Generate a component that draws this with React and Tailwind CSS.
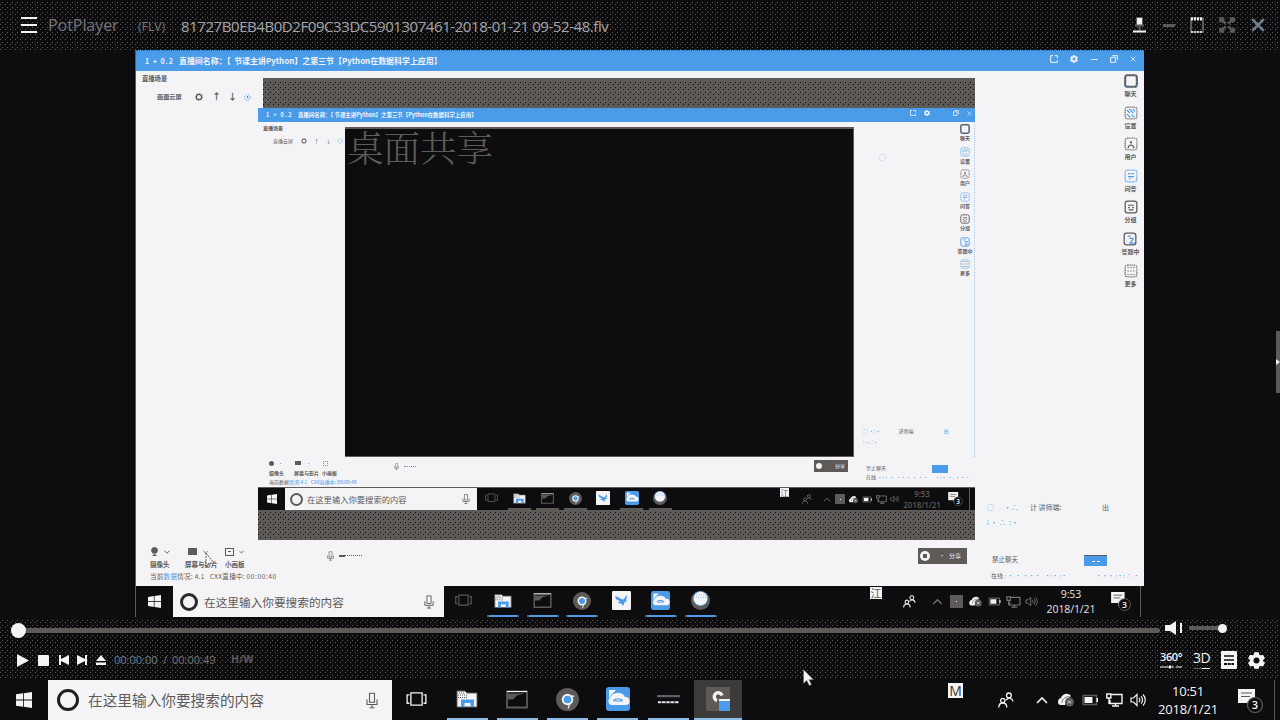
import React from "react";

const DOTS = "bg-[#0d0d0f] bg-[radial-gradient(circle,#5e5a58_0.5px,transparent_0.6px),radial-gradient(circle,#5e5a58_0.5px,transparent_0.6px)] bg-[size:5px_5px] bg-[position:0_0,3px_2px]";
const BAND = "bg-[#5e5a58] bg-[radial-gradient(circle,#0d0d0f_0.5px,transparent_0.6px),radial-gradient(circle,#0d0d0f_0.5px,transparent_0.6px)] bg-[size:5px_5px] bg-[position:0_0,3px_2px]";

function Svg({ className, box = "0 0 24 24", children }) {
  return (
    <svg className={"shrink-0 " + className} viewBox={box} fill="none" stroke="currentColor" strokeWidth="2">
      {children}
    </svg>
  );
}

const Windows = ({ className }) => (
  <Svg className={className}>
    <path fill="#f4f4f7" stroke="none" d="M0 3.5 10.8 2v9.3H0zM12 1.8 24 0v11.3H12zM0 12.6h10.8V22L0 20.5zM12 12.6h12V24l-12-1.8z" />
  </Svg>
);
const Mic = ({ className }) => (
  <Svg className={className} box="0 0 12 16">
    <path strokeWidth="1.1" d="M3.5.7h5v9h-5zM1 7v5h10V7M6 12v3.2M3.5 15.3h5" />
  </Svg>
);
const TaskView = ({ className }) => (
  <Svg className={className} box="0 0 22 16">
    <path strokeWidth="1.4" d="M5 1h12v13H5zM3.5 3H1v9h2.5M18.5 3H21v9h-2.5" />
  </Svg>
);
const Folder = ({ className }) => (
  <Svg className={className} box="0 0 22 18">
    <path fill="#f4f4f7" stroke="#5e5a58" strokeWidth="1" d="M1 1h8l2 2h10v14H1z" />
    <path stroke="#5e5a58" strokeWidth="1" strokeDasharray="1 1" d="M2 5h9M2 7.5h9M3 3h6" />
    <path fill="#4a9be8" stroke="none" d="M5 17V9.5h13V17h-3.500v-4h-6v4z" />
  </Svg>
);
const Terminal = ({ className }) => (
  <Svg className={className} box="0 0 22 18">
    <path fill="#0d0d0f" stroke="#5e5a58" strokeWidth="1.8" d="M1 1h20v16H1z" />
    <path stroke="#f4f4f7" strokeWidth="1" d="M1 1h20" />
    <path fill="#5e5a58" stroke="none" d="M2 3h17l-8 2-4 4H2z" />
  </Svg>
);
const Chrome = ({ className }) => (
  <Svg className={className}>
    <circle cx="12" cy="12" r="12" fill="#5e5a58" stroke="none" />
    <circle cx="12" cy="12" r="5" fill="#4a9be8" stroke="#f4f4f7" />
    <path stroke="#f4f4f7" strokeWidth="1.2" d="M15 8.5h4M14.5 16.5l-2 5" />
  </Svg>
);
const Bird = ({ className }) => (
  <Svg className={className}>
    <rect width="24" height="24" rx="1.5" fill="#f4f4f7" stroke="none" />
    <path fill="#4a9be8" stroke="none" d="M4 6l10 5 5-6-1 7 1 1-3 1-2 5-2-3-5-1 3-2-5-3z" />
  </Svg>
);
const CloudApp = ({ className }) => (
  <Svg className={className}>
    <rect width="24" height="24" rx="3" fill="#4a9be8" stroke="none" />
    <path fill="#f4f4f7" stroke="none" d="M3 3h7L5 8 3 12zM5 18a4 4 0 0 1-1-7 8 7 0 0 1 15-1 4 4 0 0 1 1 8H6z" />
    <path stroke="#4a9be8" strokeWidth="1.2" d="M8 14v-1l2-1h4l2 1v1z" />
  </Svg>
);
const Globe = ({ className }) => (
  <Svg className={className}>
    <circle cx="12" cy="12" r="12" fill="#5e5a58" stroke="none" />
    <circle cx="12" cy="9.5" r="9" fill="#f4f4f7" stroke="#4a9be8" strokeWidth="1.3" strokeDasharray="2 1.5" />
    <path stroke="#4a9be8" strokeWidth="1" strokeDasharray="1 2" d="M7 5h11M6 8h13" />
  </Svg>
);
const Bars = ({ className }) => (
  <Svg className={className} box="0 0 24 16">
    <path stroke="#5e5a58" strokeWidth="2.6" d="M0 5h24M1 11.500h22" />
    <path stroke="#4a9be8" strokeWidth="1" strokeDasharray="1 3" d="M2 5h20" />
    <path stroke="#f4f4f7" strokeWidth="1.6" strokeDasharray="3 1.5" d="M1 11.5h22" />
  </Svg>
);
const PotIcon = ({ className }) => (
  <Svg className={className}>
    <path fill="#5e5a58" stroke="none" d="M0 0h24v24H0z" />
    <path stroke="#f4f4f7" strokeWidth="3.4" d="M11 13.500a4 4 0 1 1 5-5" />
    <path fill="#4a9be8" stroke="none" d="M13 14h11v10H13z" />
    <path stroke="#f4f4f7" d="M13 13h11" />
  </Svg>
);
const People = ({ className }) => (
  <Svg className={className} box="0 0 16 16">
    <path strokeWidth="1.3" d="M10.9 1a2.4 2.4 0 1 1 0 4.8 2.4 2.4 0 0 1 0-4.8zM4.8 6.3a2.2 2.2 0 1 1 0 4.4 2.2 2.2 0 0 1 0-4.4zM.8 15.5c0-6 8-6 8 0M8 8c3-3 6.500-2 7 1.500" />
  </Svg>
);
const Chevron = ({ className }) => (
  <Svg className={className} box="0 0 12 8">
    <path strokeWidth="1.6" d="M1 7l5-5 5 5" />
  </Svg>
);
const ChevronDown = ({ className }) => (
  <Svg className={className} box="0 0 12 8">
    <path strokeWidth="2" d="M1 1.500l5 5 5-5" />
  </Svg>
);
const OneDrive = ({ className }) => (
  <Svg className={className} box="0 0 16 14">
    <path fill="#f4f4f7" stroke="none" d="M0 9C0 6 2 5 3 5c1-4 7-6 10-2l-4 4-2 5H3c-2 0-3-1-3-3z" />
    <path stroke="#5e5a58" strokeWidth=".8" d="M4 10c0-5 5-7 8-6" />
    <circle cx="11.500" cy="9" r="4.500" fill="#5e5a58" stroke="none" />
    <path stroke="#f4f4f7" strokeWidth=".9" d="M10 10.500l3-3M10 7.500l3 3" />
  </Svg>
);
const Battery = ({ className }) => (
  <Svg className={className} box="0 0 16 12">
    <path stroke="#5e5a58" strokeWidth="1.5" d="M1 1.500h13.500v9H1z" />
    <path fill="#f4f4f7" stroke="none" d="M2.500 3h8v6h-8zM14.500 4H16v4h-1.500z" />
  </Svg>
);
const Network = ({ className }) => (
  <Svg className={className} box="0 0 17 14">
    <path strokeWidth="1.4" d="M4.500 1.500H16v9H4V7M9.500 10.500v2.500M6 13h7M.8 1h4v4h-4zM3 5v6" />
  </Svg>
);
const Sound = ({ className }) => (
  <Svg className={className} box="0 0 16 14">
    <path strokeWidth="1.200" d="M1 5h2.500L7 1.500v11L3.500 9H1zM9 5c1 1 1 3 0 4M11 3.200c2 2 2 5.500 0 7.500M13 1.500c3 3 3 8 0 11" />
  </Svg>
);
const Notice = ({ className, n = "3" }) => (
  <Svg className={className} box="0 0 25 24">
    <path fill="#f4f4f7" stroke="none" d="M0 0h17v14h-5l-3 4v-4H0z" />
    <path stroke="#5e5a58" strokeWidth="1.2" d="M3 4h11M3 7.500h9" />
    <circle cx="17" cy="16" r="7.500" fill="#0d0d0f" stroke="#5e5a58" strokeWidth="1.2" />
    <text x="17" y="20" textAnchor="middle" fontFamily="Open Sans, sans-serif" fontWeight="600" fontSize="11" fill="#f4f4f7" stroke="none">{n}</text>
  </Svg>
);
const Gear = ({ className, hole = "#0d0d0f" }) => (
  <Svg className={className}>
    <path fill="currentColor" stroke="currentColor" strokeWidth="1.500" strokeLinejoin="round" d="M9.500 1h5l.8 3.300 2.200 1.200 3.200-1 2.300 4.200-2.400 2.300v2.200l2.400 2.300-2.300 4.200-3.200-1-2.200 1.200L14.500 23h-5l-.8-3.100-2.200-1.200-3.200 1L1 15.500l2.400-2.300V11L1 8.700l2.300-4.200 3.200 1 2.200-1.200z" />
    <circle cx="12" cy="12" r="4.200" fill={hole} stroke="none" />
  </Svg>
);
const Ring = ({ className }) => (
  <Svg className={className}>
    <circle cx="12" cy="12" r="8" strokeWidth="4" />
    <circle cx="12" cy="12" r="10.500" strokeWidth="2.500" strokeDasharray="3 5.200" />
  </Svg>
);
const Arrow = ({ className }) => (
  <Svg className={className} box="0 0 11 17">
    <path fill="#f4f4f7" stroke="#5e5a58" strokeWidth=".6" d="M.5.5v14l3.200-3 2.500 5 2.300-1-2.400-4.800H10.500z" />
  </Svg>
);

function AppSlot({ width, line, children }) {
  return (
    <div className={"flex h-full shrink-0 flex-col items-center " + width}>
      <div className="flex flex-1 items-center">{children}</div>
      <div className={line} />
    </div>
  );
}

/* Recorded session: the nested, smaller desktop */
const L3 = "h-[2px] w-[23px] bg-[#5e5a58]";
const N3 = "h-[2px] w-[23px]";
function InnerTaskbar() {
  return (
    <div className="flex h-[23px] items-center border-t border-[#5e5a58] bg-[#0d0d0f] text-[#5e5a58]">
      <div className="flex w-[27px] justify-center"><Windows className="size-[10px]" /></div>
      <div className="flex h-full w-[192px] items-center bg-[#f4f4f7] pl-[5px]">
        <div className="size-[13px] rounded-full border-2 border-[#5e5a58]" />
        <div className="ml-[4px] w-[155px] whitespace-nowrap text-[8.300px] leading-none">在这里输入你要搜索的内容</div>
        <Mic className="h-[10px] w-[8px]" />
      </div>
      <AppSlot width="w-[28px]" line={N3}><TaskView className="h-[10px] w-[13px]" /></AppSlot>
      <AppSlot width="w-[28px]" line={L3}><Folder className="h-[11px] w-[13px]" /></AppSlot>
      <AppSlot width="w-[28px]" line={L3}><Terminal className="h-[11px] w-[13px]" /></AppSlot>
      <AppSlot width="w-[28px]" line={L3}><Chrome className="size-[13px]" /></AppSlot>
      <AppSlot width="w-[28px]" line={N3}><Bird className="size-[14px]" /></AppSlot>
      <AppSlot width="w-[29px]" line={L3}><CloudApp className="size-[14px]" /></AppSlot>
      <AppSlot width="w-[28px]" line={L3}><Globe className="size-[14px]" /></AppSlot>
      <div className="ml-[106px] flex size-[9px] items-center justify-center self-start bg-[#f4f4f7] text-[8px] leading-none">江</div>
      <People className="ml-[13px] size-[10px] text-[#77736f]" />
      <Chevron className="ml-[11px] h-[5px] w-[8px] text-[#77736f]" />
      <div className="ml-[4px] flex size-[10px] items-center justify-center bg-[#5e5a58]"><div className="size-px bg-white" /></div>
      <OneDrive className="ml-[4px] h-[9px] w-[9px]" />
      <Battery className="ml-[4px] h-[7px] w-[10px]" />
      <Network className="ml-[4px] h-[9px] w-[11px] text-[#77736f]" />
      <Sound className="ml-[3px] h-[8px] w-[9px] text-[#77736f]" />
      <div className="ml-[4px] w-[38px] text-center font-['Open_Sans'] text-[8px] leading-[11px] font-semibold tracking-[-.1px]">
        <div>9:53</div><div>2018/1/21</div>
      </div>
      <Notice className="ml-[7px] h-[14px] w-[15px]" />
      <div className="ml-[6px] h-full w-px bg-[#5e5a58]" />
    </div>
  );
}

const TOOLS = ["聊天", "设置", "用户", "问答", "分组", "答题中", "更多"];
function ToolGlyph({ index, className }) {
  const marks = [
    "",
    "M5 7l5 5M9 5l7 7M15 5l4 4M5 14l6 6M13 15l5 4",
    "M12 7v4M7 19c1-7 9-7 10 0M10 9h4",
    "M7 8h4M13 8h4M7 13h10M9 17h2",
    "M7 9h10M7 13h3M14 13h3M8 17h8",
    "M8 7h5M11 11h7M18 11l-6 8h8",
    "M6 6h2M11 6h2M16 6h2M6 12h2M11 12h2M16 12h2M6 18h2M11 18h2M16 18h2",
  ];
  return (
    <Svg className={className}>
      <rect x="2" y="2" width="20" height="20" rx="4" strokeWidth={index === 0 ? 3.5 : 2.2} strokeDasharray={index === 0 || index === 4 || index === 5 ? "none" : "2 1.5"} />
      {index === 0 && <rect x="2" y="2" width="20" height="20" rx="4" stroke="#4a9be8" strokeWidth="2" strokeDasharray="2 4" />}
      {index > 0 && <path stroke={index % 2 ? "#4a9be8" : "#5e5a58"} d={marks[index]} />}
    </Svg>
  );
}

function InnerScreen() {
  return (
    <div className="w-[717px]">
      <div className={"ml-[5px] h-[30px] border-y-2 border-[#5e5a58] " + BAND} />
      <div className="flex h-[14px] items-center bg-[#4a9be8] pl-[8px] text-[#f4f4f7]">
        <div className="w-[644px] whitespace-nowrap text-[5.450px] leading-[8px] font-bold"><span className="mr-[5px] tracking-[1.400px]">1 + 0.2</span>直播间名称：【 节课主讲Python】之第三节【Python在数据科学上应用】</div>
        <Svg className="-mt-1 size-[6px]"><path strokeWidth="3" d="M9 2H2v20h20v-7M14 2h8v8" /></Svg>
        <Gear className="-mt-1 ml-[8px] size-[6px]" hole="#4a9be8" />
        <Svg className="-mt-1 ml-[23px] size-[6px]"><path strokeWidth="3" d="M2 7h14v15H2zM7 2h15v14" /></Svg>
        <Svg className="-mt-1 ml-[8px] size-[5px]"><path strokeWidth="3" d="M2 2l20 20M22 2 2 22" /></Svg>
      </div>
      <div className="flex h-[335px]">
        <div className="w-[87px] pt-[3px] text-[#5e5a58]">
          <div className="pl-[5px] text-[5px] leading-[6px] font-bold">直播场景</div>
          <div className="mt-[6px] flex items-center pl-[15px] text-[5px] leading-[7px]">
            <span className="w-[28px] whitespace-nowrap">直播云屏</span>
            <Ring className="size-[6px]" />
            <span className="ml-[7px]">↑</span><span className="ml-[7px]">↓</span>
            <Svg className="ml-[6px] size-[6px] text-[#4a9be8]"><circle cx="12" cy="12" r="9" strokeWidth="3" strokeDasharray="4 5" /></Svg>
          </div>
        </div>
        <div className="mt-[5px] h-[330px] w-[509px] border-t-2 border-r border-b border-[#5e5a58] bg-[#0d0d0f] text-[36.500px] leading-[34px] font-light text-[#5e5a58]">
          <span className="ml-[2px] font-['Noto_Serif_CJK_SC','Noto_Sans_CJK_SC',serif]">桌面共享</span>
        </div>
        <div className="flex w-[121px] border-r border-dotted border-[#a6cbf0]">
          <div className="flex w-[104px] flex-col pt-[31px] pl-[24px] text-[#4a9be8]">
            <Svg className="size-[9px]"><circle cx="12" cy="12" r="9" strokeDasharray="2 4" /></Svg>
            <div className="mt-[266px] -ml-[15px] flex text-[5px] leading-[6px] whitespace-nowrap">
              <span>◌ ·:·</span><span className="ml-[18px] text-[#5e5a58]">讲师端</span><span className="ml-[30px]">出</span>
            </div>
            <div className="mt-[5px] -ml-[15px] text-[5px] leading-[6px]">:·. ⁚·</div>
          </div>
          <div className="flex flex-col items-center pt-[2px] text-[#5e5a58]">
            {TOOLS.map((t, i) => (
              <div key={t} className="flex h-[22.500px] w-[14px] flex-col items-center">
                <ToolGlyph index={i} className={i % 2 || i === 6 ? "size-[10px] text-[#4a9be8]" : "size-[10px]"} />
                <span className="mt-[1px] text-[5px] leading-[6px] font-bold whitespace-nowrap">{t}</span>
              </div>
            ))}
          </div>
        </div>
      </div>
      <div className="flex h-[30px] items-start text-[5px] leading-[6px] whitespace-nowrap text-[#5e5a58]">
        <div className="w-[136px] pt-[3px] pl-[11px]">
          <div className="flex items-center">
            <div className="size-[5px] rounded-full bg-[#5e5a58]" /><span className="ml-[4px] w-[17px] text-[#4a9be8]">·</span>
            <div className="h-[4px] w-[6px] bg-[#5e5a58]" /><span className="ml-[5px] w-[17px] text-[#4a9be8]">·</span>
            <div className="size-[5px] border border-dotted border-[#4a9be8]" />
          </div>
          <div className="mt-[4px] flex font-bold"><span className="w-[25px]">摄像头</span><span className="w-[28px]">屏幕与影片</span><span>小画板</span></div>
          <div className="mt-[3px] text-[#4a9be8]"><span className="text-[#5e5a58]">当前数据</span>情况:4.1 &nbsp; CXX直播中: 00:00:40</div>
        </div>
        <Mic className="mt-[6px] h-[7px] w-[5px]" />
        <div className="mt-[9px] ml-[5px] w-[12px] border-t border-dotted border-[#4a9be8]" />
        <div className="mt-[3px] ml-[398px] flex h-[12px] w-[34px] items-center bg-[#5e5a58] pl-[2px] text-[#f4f4f7]">
          <div className="size-[6px] rounded-full bg-[#f4f4f7]" /><span className="ml-[13px]">分享</span>
        </div>
        <div className="mt-[8px] ml-[18px] w-[104px]">
          <div className="flex"><span className="w-[66px]">禁止聊天</span><div className="h-[8px] w-[16px] bg-[#4a9be8]" /></div>
          <div className="mt-[1px] flex text-[#4a9be8]"><span className="w-[76px]"><span className="text-[#5e5a58]">在线</span> ·:· · ··· · ··</span><span>·:· ·. ···</span></div>
        </div>
      </div>
      <InnerTaskbar />
      <div className={"h-[30px] border-b-2 border-[#5e5a58] " + BAND} />
    </div>
  );
}

const L2 = "h-[2px] w-[32px] border-x-2 border-[#5e5a58] bg-[#4a9be8]";
const N2 = "h-[2px] w-[32px]";
function VideoTaskbar() {
  return (
    <div className="flex h-[31px] items-center bg-[#0d0d0f] text-[#5e5a58]">
      <div className="flex w-[37px] justify-center"><Windows className="size-[13px]" /></div>
      <div className="flex h-full w-[271px] items-center bg-[#f4f4f7] pl-[7px]">
        <div className="size-[18px] rounded-full border-[3px] border-[#2a2929]" />
        <div className="ml-[6px] w-[220px] text-[11.670px] leading-none whitespace-nowrap">在这里输入你要搜索的内容</div>
        <Mic className="h-[14px] w-[10px]" />
      </div>
      <AppSlot width="w-[38px]" line={N2}><TaskView className="h-[13px] w-[17px]" /></AppSlot>
      <AppSlot width="w-[41px]" line={L2}><Folder className="h-[16px] w-[18px]" /></AppSlot>
      <AppSlot width="w-[39px]" line={L2}><Terminal className="h-[15px] w-[19px]" /></AppSlot>
      <AppSlot width="w-[40px]" line={L2}><Chrome className="size-[18px]" /></AppSlot>
      <AppSlot width="w-[39px]" line={N2}><Bird className="size-[19px]" /></AppSlot>
      <AppSlot width="w-[39px]" line={L2}><CloudApp className="size-[19px]" /></AppSlot>
      <AppSlot width="w-[41px]" line={L2}><Globe className="size-[19px]" /></AppSlot>
      <div className="mt-px ml-[149px] flex size-[12px] items-center justify-center self-start bg-[#f4f4f7] text-[11px] leading-none">江</div>
      <People className="ml-[21px] size-[13px] text-[#f4f4f7]" />
      <Chevron className="ml-[16px] h-[7px] w-[11px] text-[#77736f]" />
      <div className="ml-[7px] flex size-[13px] items-center justify-center bg-[#5e5a58]"><div className="size-px bg-white" /></div>
      <OneDrive className="ml-[6px] h-[11px] w-[13px]" />
      <Battery className="ml-[6px] h-[9px] w-[13px]" />
      <Network className="ml-[5px] h-[12px] w-[15px] text-[#77736f]" />
      <Sound className="ml-[4px] h-[11px] w-[13px] text-[#77736f]" />
      <div className="ml-[6px] w-[54px] text-center font-['Open_Sans'] text-[10.500px] leading-[15px] tracking-[-.1px] whitespace-nowrap text-[#e4e4e7]">
        <div>9:53</div><div>2018/1/21</div>
      </div>
      <Notice className="ml-[13px] h-[19px] w-[20px]" />
      <div className="ml-[9px] h-full w-px bg-[#5e5a58]" />
    </div>
  );
}

function Video() {
  return (
    <div className="relative h-[567px] w-[1009px] border-l border-[#5e5a58] bg-[#f4f4f7]">
      <div className="flex h-[21px] items-center border-t border-dotted border-[#5e5a58] bg-[#4a9be8] pl-[9px] text-[#f4f4f7]">
        <div className="w-[905px] text-[7.950px] leading-none font-bold whitespace-nowrap"><span className="mr-[5px] text-[7px] tracking-[1px]">1 + 0.2</span>直播间名称：【 &nbsp;节课主讲Python】之第三节【Python在数据科学上应用】</div>
        <Svg className="-mt-1 size-[8px]"><path strokeWidth="3" d="M9 2H2v20h20v-7M14 2h8v8" /></Svg>
        <Gear className="-mt-1 ml-[12px] size-[8px]" hole="#4a9be8" />
        <Svg className="-mt-1 ml-[13px] size-[7px]"><path strokeWidth="3" d="M0 12h24" /></Svg>
        <Svg className="-mt-1 ml-[12px] size-[8px]"><path strokeWidth="3" d="M2 7h14v15H2zM7 2h15v14" /></Svg>
        <Svg className="-mt-1 ml-[12px] size-[6px]"><path strokeWidth="3" d="M2 2l20 20M22 2 2 22" /></Svg>
      </div>
      <div className="flex h-[469px]">
        <div className="w-[122px] shrink-0 text-[#5e5a58]">
          <div className="mt-[4px] pl-[6px] text-[6.300px] leading-[8px] font-bold">直播场景</div>
          <div className="mt-[9px] flex items-center pl-[21px] text-[6.200px] leading-[10px] font-bold whitespace-nowrap">
            <span className="w-[38px]">画面云屏</span>
            <Ring className="size-[8px]" />
            <span className="ml-[9px] w-[7px] text-[9px]">↑</span><span className="ml-[9px] w-[7px] text-[9px]">↓</span>
            <Svg className="ml-[9px] size-[7px] text-[#4a9be8]"><circle cx="12" cy="12" r="10" strokeWidth="3" strokeDasharray="4 4" /><path strokeWidth="3" stroke="#5e5a58" d="M12 7v6h4" /></Svg>
          </div>
        </div>
        <div className="pt-[7px]"><InnerScreen /></div>
        <div className="flex flex-1 justify-between text-[#5e5a58]">
          <div className="flex flex-col pt-[431px] pl-[12px] text-[7px] leading-[10px] whitespace-nowrap">
            <div className="flex text-[#4a9be8]"><span className="w-[17px]">◌</span><span className="w-[26px]">·∴</span><span className="w-[72px] text-[#5e5a58]">计 讲师端:</span><span className="text-[#5e5a58]">出</span></div>
            <div className="mt-[5px] text-[#4a9be8]">⁞ · ∴ &nbsp;:·</div>
          </div>
          <div className="flex w-[27px] flex-col items-center pt-[3px]">
            {TOOLS.map((t, i) => (
              <div key={t} className="flex h-[31.600px] flex-col items-center">
                <ToolGlyph index={i} className={i === 3 ? "size-[14px] text-[#4a9be8]" : "size-[14px]"} />
                <span className="mt-[2px] text-[6px] leading-[8px] font-bold whitespace-nowrap">{t}</span>
              </div>
            ))}
          </div>
        </div>
      </div>
      <div className="flex h-[46px] text-[6.500px] leading-[8px] whitespace-nowrap text-[#5e5a58]">
        <div className="w-[191px] pt-[7px] pl-[14px]">
          <div className="flex h-[9px] items-center">
            <Svg className="size-[9px]"><circle cx="12" cy="9" r="8" fill="currentColor" /><path strokeWidth="4" d="M7 22h10" /></Svg><ChevronDown className="mr-[18px] ml-[5px] h-[4px] w-[6px]" />
            <div className="h-[7px] w-[9px] bg-[#5e5a58]" /><ChevronDown className="mr-[17px] ml-[6px] h-[4px] w-[5px]" />
            <div className="flex h-[8px] w-[9px] items-center justify-center border border-[#5e5a58]"><div className="h-px w-[3px] bg-[#5e5a58]" /></div><ChevronDown className="ml-[5px] h-[4px] w-[5px]" />
          </div>
          <div className="mt-[4px] flex font-bold"><span className="w-[35px]">摄像头</span><span className="w-[40px]">屏幕与影片</span><span>小画板</span></div>
          <div className="mt-[4px] tracking-[.300px]">当前<span className="text-[#4a9be8]">数据</span>情况: 4.1 &nbsp; CXX直播中: <span className="tracking-[.6px]">00:00:40</span></div>
        </div>
        <Mic className="mt-[11px] h-[10px] w-[7px]" />
        <div className="mt-[15px] ml-[5px] h-[2px] w-[6px] bg-[#5e5a58]" /><div className="mt-[15px] w-[17px] border-t border-dotted border-[#5e5a58]" />
        <div className="mt-[8px] ml-[556px] flex h-[16px] w-[49px] items-center bg-[#5e5a58] pl-[2px] text-[6px] text-[#f4f4f7]">
          <div className="flex size-[10px] items-center justify-center rounded-full bg-[#f4f4f7]"><div className="size-[4px] bg-[#5e5a58]" /></div><span className="ml-[9px] w-[10px]">·</span>分享
        </div>
        <div className="mt-[15px] ml-[24px] w-[150px]">
          <div className="flex h-[11px] items-start"><span className="w-[93px] pl-[1px]">禁止聊天</span><div className="flex h-[11px] w-[23px] items-center justify-center gap-[2px] border-t border-[#5e5a58] bg-[#4a9be8]"><div className="h-px w-[3px] bg-white" /><div className="h-px w-[3px] bg-white" /></div></div>
          <div className="mt-[6px] flex text-[6px] text-[#4a9be8]"><span className="w-[105px]"><span className="text-[#5e5a58]">在线</span> : ·.· ··· &nbsp; ·:· :·</span><span>··· :·: ∴ ·</span></div>
        </div>
      </div>
      <VideoTaskbar />
      <Svg className="absolute top-[502px] left-[69px] h-[16px] w-[10px]" box="0 0 10 16"><path stroke="#5e5a58" strokeWidth="1" strokeDasharray="2 1" fill="#f4f4f7" d="M1 1v13l3-3h5z" /></Svg>
    </div>
  );
}

function TitleBar() {
  return (
    <div className={"flex h-[50px] items-center text-[#706d6d] " + DOTS}>
      <div className="ml-[21px] flex h-[16px] w-[16px] flex-col justify-between">
        <div className="h-[2px] bg-[#f4f4f7]" /><div className="h-[2px] bg-[#f4f4f7]" /><div className="h-[2px] bg-[#f4f4f7]" />
      </div>
      <div className="ml-[11px] w-[90px] font-['Open_Sans'] text-[16px] leading-none tracking-[-.05px] text-[#747479]">PotPlayer</div>
      <div className="mt-[3px] w-[43px] font-['Open_Sans'] text-[12px] leading-none tracking-[.1px] text-[#77777b]">(FLV)</div>
      <div className="mt-[2px] flex-1 font-['Open_Sans'] text-[15px] leading-none tracking-[-.430px] whitespace-nowrap text-[#a5a5aa]">81727B0EB4B0D2F09C33DC5901307461-2018-01-21 09-52-48.flv</div>
      <Svg className="h-[16px] w-[13px]" box="0 0 13 16"><path stroke="#5e5a58" strokeWidth="2" d="M2 8.500h9M6.500 8v6" /><path fill="#f4f4f7" stroke="#5e5a58" strokeWidth="1" d="M3.500.5h6V8h-6z" /><path stroke="#f4f4f7" strokeWidth="2" d="M0 14.500h13" /></Svg>
      <div className="ml-[17px] h-[3px] w-[12px] bg-[#5e5a58]" />
      <Svg className="ml-[15px] h-[16px] w-[14px]" box="0 0 14 16"><path stroke="#5e5a58" strokeWidth="2" d="M1 1h12v14H1z" /><path stroke="#f4f4f7" strokeWidth="3" strokeDasharray="2 1" d="M1 2h12" /><path stroke="#f4f4f7" strokeWidth="1.500" strokeDasharray="2 1" d="M1 15h12" /></Svg>
      <Svg className="ml-[15px] size-[16px]"><path strokeWidth="3.500" stroke="#5e5a58" d="M2 8V2h6M16 2h6v6M22 16v6h-6M8 22H2v-6M2 2l8 8M22 2l-8 8M2 22l8-8M22 22l-8-8" /></Svg>
      <Svg className="mr-[15px] ml-[16px] size-[14px]"><path stroke="#6f8192" strokeWidth="4" d="M2 2l20 20M22 2 2 22" /></Svg>
    </div>
  );
}

function Controls() {
  return (
    <div className={"h-[62px] text-[#f4f4f7] " + DOTS}>
      <div className="flex h-[24px] items-center pl-[11px]">
        <div className="size-[15px] shrink-0 rounded-full bg-[#f4f4f7]" />
        <div className="h-[5px] w-[1134px] shrink-0 rounded-r-full bg-[#5e5a58]" />
        <Svg className="-mt-1 ml-[5px] h-[14px] w-[18px]" box="0 0 18 14"><path fill="#f4f4f7" stroke="none" d="M0 4h5l6-4v14l-6-4H0zM15 2h2v10h-2z" /></Svg>
        <div className="-mt-1 ml-[6px] h-[4px] w-[29px] bg-[#5e5a58]" />
        <div className="-mt-1 size-[9px] rounded-full bg-[#f4f4f7]" />
      </div>
      <div className="flex h-[36px] items-center pl-[17px] font-['Open_Sans']">
        <Svg className="h-[13px] w-[12px]" box="0 0 12 13"><path fill="#f4f4f7" stroke="none" d="M0 0l12 6.500L0 13z" /></Svg>
        <div className="ml-[9px] size-[11px] rounded-[1px] bg-[#f4f4f7]" />
        <Svg className="ml-[10px] size-[10px]" box="0 0 10 10"><path fill="#f4f4f7" stroke="none" d="M0 0h2v4l8-4v10L2 6v4H0z" /></Svg>
        <Svg className="ml-[8px] size-[10px]" box="0 0 10 10"><path fill="#f4f4f7" stroke="none" d="M10 0H8v4L0 0v10l8-4v4h2z" /></Svg>
        <Svg className="ml-[9px] size-[10px]" box="0 0 10 10"><path fill="#f4f4f7" stroke="none" d="M5 0l5 6H0zM0 7.500h10V10H0z" /></Svg>
        <span className="ml-[8px] w-[49px] text-[11px] text-[#6f7f92]">00:00:00</span>
        <span className="w-[9px] text-[11px] text-[#77736f]">/</span>
        <span className="w-[59px] text-[11px] text-[#77736f]">00:00:49</span>
        <span className="text-[10.500px] font-bold text-[#5e5a58]">H/W</span>
        <div className="flex-1" />
        <div className="flex w-[33px] flex-col">
          <span className="text-[11px] leading-[12px] font-semibold tracking-[-.4px]">360°</span>
          <Svg className="mt-[2px] h-[4px] w-[22px]" box="0 0 22 4"><path strokeWidth="1" d="M0 2h14M16 2h6" /><path strokeWidth="3" d="M9 2h2" /></Svg>
        </div>
        <div className="flex w-[28px] flex-col">
          <span className="text-[14px] leading-[14px] tracking-[-.5px]">3D</span>
          <div className="mt-[3px] flex h-px w-[17px]"><div className="flex-1 bg-[#5e5a58]" /><div className="flex-1 bg-[#f4f4f7]" /></div>
        </div>
        <Svg className="h-[18px] w-[16px]" box="0 0 16 18"><rect width="16" height="18" rx="1" fill="#f4f4f7" stroke="none" /><path stroke="#0d0d0f" strokeWidth="1.600" d="M3 5h10M3 9h10" /><path stroke="#0d0d0f" strokeWidth="2" strokeDasharray="3 .7" d="M3 13h10" /></Svg>
        <Gear className="mr-[15px] ml-[11px] size-[17px]" />
      </div>
    </div>
  );
}

const L1 = "h-[2px] w-[41px] bg-[#8ebce6]";
function Taskbar() {
  return (
    <div className="flex h-[40px] items-center bg-[#0d0d0f] text-[#f4f4f7]">
      <div className="flex w-[48px] justify-center"><Windows className="size-[16px]" /></div>
      <div className="flex h-full w-[344px] items-center bg-[#f4f4f7] pl-[9px] text-[#5e5a58]">
        <div className="size-[22px] rounded-full border-[3px] border-[#1d1d1f]" />
        <div className="ml-[9px] w-[278px] text-[14.670px] leading-none whitespace-nowrap">在这里输入你要搜索的内容</div>
        <Mic className="h-[17px] w-[12px]" />
      </div>
      <AppSlot width="w-[49px]" line="h-[2px]"><TaskView className="h-[15px] w-[21px]" /></AppSlot>
      <AppSlot width="w-[52px]" line={L1}><Folder className="h-[18px] w-[22px]" /></AppSlot>
      <AppSlot width="w-[48px]" line={L1}><Terminal className="h-[19px] w-[22px]" /></AppSlot>
      <AppSlot width="w-[52px]" line={L1}><Chrome className="size-[23px]" /></AppSlot>
      <AppSlot width="w-[49px]" line={L1}><CloudApp className="size-[24px]" /></AppSlot>
      <AppSlot width="w-[52px]" line={L1}><Bars className="h-[16px] w-[23px]" /></AppSlot>
      <div className="flex h-full w-[48px] flex-col items-center bg-[#3d3b3a]">
        <div className="flex flex-1 items-center"><PotIcon className="size-[24px]" /></div>
        <div className="h-[2px] w-full bg-[#8ebce6]" />
      </div>
      <div className="mt-[3px] ml-[206px] flex size-[15px] items-center justify-center self-start bg-[#f4f4f7] font-['Open_Sans'] text-[14px] leading-none text-[#3a3838]">M</div>
      <People className="ml-[35px] size-[16px]" />
      <Chevron className="ml-[22px] h-[8px] w-[12px]" />
      <OneDrive className="ml-[10px] h-[14px] w-[16px]" />
      <Battery className="ml-[8px] h-[12px] w-[16px]" />
      <Network className="ml-[8px] h-[14px] w-[17px]" />
      <Sound className="ml-[7px] h-[14px] w-[16px]" />
      <div className="ml-[11px] w-[62px] text-center font-['Open_Sans'] text-[13px] leading-[18px] tracking-[-.2px] whitespace-nowrap">
        <div>10:51</div><div>2018/1/21</div>
      </div>
      <Notice className="mt-[2px] ml-[19px] h-[24px] w-[25px]" />
      <div className="ml-[11px] h-full w-px bg-[#5e5a58]" />
    </div>
  );
}

export default function App() {
  return (
    <div className="relative h-[720px] w-[1280px] overflow-hidden bg-[#0d0d0f] font-['Noto_Sans_CJK_SC',sans-serif]">
      <TitleBar />
      <div className="flex h-[568px] items-start pl-[135px]"><Video /></div>
      <Controls />
      <Taskbar />
      <div className="absolute top-[331px] right-0 flex h-[62px] w-[4px] items-center bg-[#5e5a58]">
        <Svg className="h-[6px] w-[4px]" box="0 0 4 6"><path fill="#f4f4f7" stroke="none" d="M0 0l4 3-4 3z" /></Svg>
      </div>
      <Arrow className="absolute top-[669px] left-[803px] h-[17px] w-[11px]" />
    </div>
  );
}
